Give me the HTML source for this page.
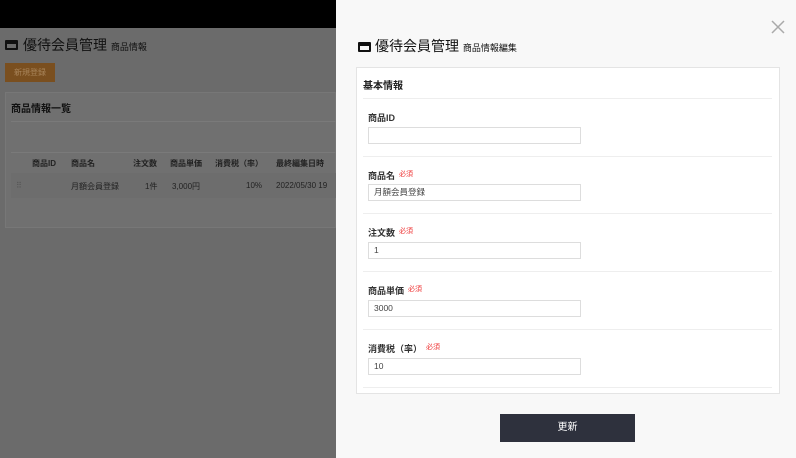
<!DOCTYPE html>
<html><head><meta charset="utf-8"><style>
*{margin:0;padding:0;box-sizing:border-box}
body{width:796px;height:458px;overflow:hidden;position:relative;font-family:"Liberation Sans","Noto Sans CJK JP",sans-serif;background:#6b6b6b;color:#222}
.a{position:absolute}
.lbl{font-size:9px;font-weight:bold;color:#333}
.req{color:#e33;font-size:7px;margin-left:4px;font-weight:normal;vertical-align:top}
.inp{position:absolute;left:368px;width:213px;height:17px;border:1px solid #ddd;background:#fff;font-size:8.5px;padding-left:5px;line-height:15px;color:#444}
.sep{position:absolute;left:363px;width:409px;height:1px;background:#eee}
.th{font-size:8px;font-weight:bold;color:#222}
.td{font-size:8px;color:#222}
</style></head><body>
<div class="a" style="left:0;top:0;width:796px;height:28px;background:#000"></div>
<div class="a" style="left:5px;top:40px;width:13px;height:10px;border:2px solid #111;border-top-width:4px;border-radius:1px"></div>
<div class="a" style="left:23px;top:35px;font-size:14px;color:#111">優待会員管理 <span style="font-size:9px">商品情報</span></div>
<div class="a" style="left:5px;top:63px;width:50px;height:19px;background:#7a4f1f;color:#a8845a;font-size:8px;line-height:19px;text-align:center">新規登録</div>
<div class="a" style="left:5px;top:92px;width:331px;height:136px;background:#707070;border:1px solid #777"></div>
<div class="a" style="left:11px;top:100px;font-size:10px;font-weight:bold;color:#111">商品情報一覧</div>
<div class="a" style="left:11px;top:121px;width:325px;height:1px;background:#7a7a7a"></div>
<div class="a" style="left:11px;top:152px;width:325px;height:1px;background:#7a7a7a"></div>
<div class="a th" style="left:32px;top:158px">商品ID</div>
<div class="a th" style="left:71px;top:158px">商品名</div>
<div class="a th" style="left:133px;top:158px">注文数</div>
<div class="a th" style="left:170px;top:158px">商品単価</div>
<div class="a th" style="left:215px;top:158px">消費税（率）</div>
<div class="a th" style="left:276px;top:158px">最終編集日時</div>
<div class="a" style="left:11px;top:173px;width:325px;height:25px;background:#6d6d6d"></div>
<div class="a td" style="left:16px;top:181px;color:#555">⠿</div>
<div class="a td" style="left:71px;top:181px">月額会員登録</div>
<div class="a td" style="left:145px;top:181px">1件</div>
<div class="a td" style="left:172px;top:181px">3,000円</div>
<div class="a td" style="left:246px;top:181px">10%</div>
<div class="a td" style="left:276px;top:181px">2022/05/30 19</div>
<div class="a" style="left:336px;top:0;width:460px;height:458px;background:#f8f8f8"></div>
<svg class="a" style="left:771px;top:20px" width="14" height="14" viewBox="0 0 14 14"><path d="M1 1L13 13M13 1L1 13" stroke="#aaa" stroke-width="1.5"/></svg>
<div class="a" style="left:358px;top:42px;width:13px;height:10px;border:2px solid #111;border-top-width:4px;border-radius:1px"></div>
<div class="a" style="left:375px;top:36px;font-size:14px;color:#111">優待会員管理 <span style="font-size:9px">商品情報編集</span></div>
<div class="a" style="left:356px;top:67px;width:424px;height:327px;background:#fff;border:1px solid #e4e4e4"></div>
<div class="a" style="left:363px;top:77px;font-size:10px;font-weight:bold;color:#222">基本情報</div>
<div class="sep" style="top:98px"></div>
<div class="a lbl" style="left:368px;top:111px">商品ID</div>
<div class="inp" style="top:127px"></div>
<div class="sep" style="top:156px"></div>
<div class="a lbl" style="left:368px;top:169px">商品名<span class="req">必須</span></div>
<div class="inp" style="top:184px">月額会員登録</div>
<div class="sep" style="top:213px"></div>
<div class="a lbl" style="left:368px;top:226px">注文数<span class="req">必須</span></div>
<div class="inp" style="top:242px">1</div>
<div class="sep" style="top:271px"></div>
<div class="a lbl" style="left:368px;top:284px">商品単価<span class="req">必須</span></div>
<div class="inp" style="top:300px">3000</div>
<div class="sep" style="top:329px"></div>
<div class="a lbl" style="left:368px;top:342px">消費税（率）<span class="req">必須</span></div>
<div class="inp" style="top:358px">10</div>
<div class="sep" style="top:387px"></div>
<div class="a" style="left:500px;top:414px;width:135px;height:28px;background:#2e313d;color:#fff;font-size:10px;line-height:28px;text-align:center">更新</div>
</body></html>
